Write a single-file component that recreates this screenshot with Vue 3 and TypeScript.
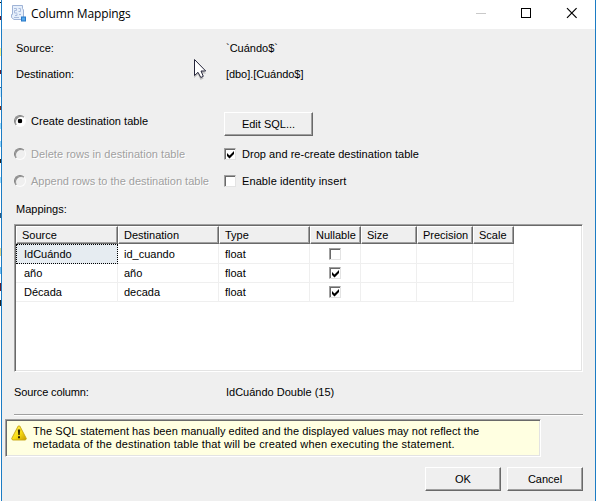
<script setup lang="ts">
interface Column { label: string; width: number }
interface Mapping { source: string; destination: string; type: string; nullable: boolean }

const columns: Column[] = [
  { label: 'Source', width: 102 },
  { label: 'Destination', width: 101 },
  { label: 'Type', width: 91 },
  { label: 'Nullable', width: 51 },
  { label: 'Size', width: 56 },
  { label: 'Precision', width: 56 },
  { label: 'Scale', width: 41 },
]
const template = columns.map((c) => c.width + 'px').join(' ')

const mappings: Mapping[] = [
  { source: 'IdCuándo', destination: 'id_cuando', type: 'float', nullable: false },
  { source: 'año', destination: 'año', type: 'float', nullable: true },
  { source: 'Década', destination: 'decada', type: 'float', nullable: true },
]
</script>

<template>
  <div class="screen">
    <div class="behind"></div>
    <div class="window">
      <header class="titlebar">
        <svg class="app-icon" width="15" height="17" viewBox="0 0 15 17">
          <path d="M1.5.5H11.5V3.5L12.5 5V14.5H3L.5 12.5V9.5H1.5Z" fill="#e6effb" stroke="#9fb3d6" />
          <path d="M3 3.5H5.5V5.500H3.500V8H6M7.500 3.500H9.500V6.500H7.500M4 10.500H6V8.500M8 9.500H10M3 12.500H8" fill="none" stroke="#a9bbdc" />
          <rect x="10.500" y="12" width="4" height="4" fill="#54a7ea" stroke="#2878c8" />
        </svg>
        <h1>Column Mappings</h1>
        <div class="controls">
          <svg width="46" height="29" viewBox="0 0 46 29"><path d="M18 13.500H28" stroke="#c9c9c9" /></svg>
          <svg width="46" height="29" viewBox="0 0 46 29"><rect x="17.500" y="8.500" width="9" height="9" fill="none" stroke="#000" /></svg>
          <svg width="46" height="29" viewBox="0 0 46 29"><path d="M17 8.200L26.600 17.800M26.600 8.200L17 17.800" stroke="#000" stroke-width="1.200" /></svg>
        </div>
      </header>

      <main class="content">
        <div class="pair first"><span>Source:</span><span>`Cuándo$`</span></div>
        <div class="pair"><span>Destination:</span><span class="tight">[dbo].[Cuándo$]</span></div>

        <div class="options">
          <label class="opt create"><i class="radio on"></i><span class="loose">Create destination table</span></label>
          <button class="btn edit">Edit SQL...</button>
          <label class="opt off"><i class="radio"></i><span class="loose">Delete rows in destination table</span></label>
          <label class="opt"><i class="check"><svg width="9" height="9" viewBox="0 0 9 9"><path d="M1 3V6L3.500 8.500L8 4V1L3.500 5.500Z" /></svg></i><span class="loose">Drop and re-create destination table</span></label>
          <label class="opt off"><i class="radio"></i><span>Append rows to the destination table</span></label>
          <label class="opt"><i class="check"></i><span class="looser">Enable identity insert</span></label>
        </div>

        <div class="caption">Mappings:</div>
        <div class="grid">
          <div class="row head" :style="{ gridTemplateColumns: template }">
            <div v-for="c in columns" :key="c.label" class="th"><span>{{ c.label }}</span></div>
          </div>
          <div v-for="(m, i) in mappings" :key="m.source" class="row" :class="{ current: i === 0 }" :style="{ gridTemplateColumns: template }">
            <div class="td lead">{{ m.source }}</div>
            <div class="td">{{ m.destination }}</div>
            <div class="td">{{ m.type }}</div>
            <div class="td center"><i class="check"><svg v-if="m.nullable" width="9" height="9" viewBox="0 0 9 9"><path d="M1 3V6L3.500 8.500L8 4V1L3.500 5.500Z" /></svg></i></div>
            <div class="td"></div>
            <div class="td"></div>
            <div class="td"></div>
          </div>
        </div>

        <div class="pair detail"><span class="tight2">Source column:</span><span>IdCuándo Double (15)</span></div>
        <div class="rule"></div>
      </main>

      <div class="notice">
        <svg class="warn" width="16" height="16" viewBox="0 0 16 16">
          <defs>
            <linearGradient id="amber" x1="0" y1="0" x2="1" y2="1"><stop offset="0" stop-color="#fff46a" /><stop offset=".55" stop-color="#f8dc12" /><stop offset="1" stop-color="#c59a00" /></linearGradient>
          </defs>
          <path d="M7.200 1H8.800L15.300 13.500L14.500 15H1.500L.7 13.500Z" fill="url(#amber)" stroke="#c8a510" stroke-width=".9" stroke-linejoin="round" />
          <path d="M6.800 4.500H9.200L8.700 10H7.300ZM7 11.200H9V13.200H7Z" fill="#302700" />
        </svg>
        <p><span class="l1">The SQL statement has been manually edited and the displayed values may not reflect the</span><br /><span class="l2">metadata of the destination table that will be created when executing the statement.</span></p>
      </div>

      <footer class="actions">
        <button class="btn">OK</button>
        <button class="btn">Cancel</button>
      </footer>

      <svg class="cursor" width="16" height="23" viewBox="0 0 16 23">
        <path d="M3 3V20L7 16.500L9.500 22L12.500 20.500L10.500 15.500H15Z" fill="#000" opacity=".2" />
        <path d="M3.500 1.500V17.500L7 14.300L9.800 19.500L12.300 18.300L10 13H14.700Z" fill="#fff" stroke="#25253a" />
      </svg>
    </div>
  </div>
</template>

<style>
body { margin: 0; overflow: hidden; }
</style>

<style scoped>
* { box-sizing: border-box; }
.screen {
  display: flex;
  width: 596px;
  height: 501px;
  font: 11px/13px "Liberation Sans", Arial, sans-serif;
  color: #000;
  white-space: nowrap;
}
.behind {
  width: 1px;
  background: linear-gradient(#fff 0 2px, #111 2px 3px, #fff 3px 16px, #621c2c 16px 20px, #fff 20px 48px, #fff58c 48px 56px, #fff 56px 70px, #621c2c 70px 74px, #fff 74px 87px, #2b5d91 87px 88px, #c9eaff 88px 97px, #fff 97px 106px, #7a2d17 106px 110px, #fff 110px 123px, #9bdcff 123px 129px, #fff 129px 141px, #8fd5ff 141px 147px, #fff 147px 159px, #222 159px 163px, #fff 163px 177px, #9bdcff 177px 183px, #fff 183px 213px, #30587c 213px 218px, #fff 218px 248px, #e8d98a 248px 256px, #fff 256px 267px, #6abcf2 267px 274px, #fff 274px 283px, #621c2c 283px 291px, #fff 291px 300px, #222 300px 306px, #fff 306px);
}
.window {
  position: relative;
  display: flex;
  flex-direction: column;
  width: 595px;
  border: solid #1c7cc4;
  border-width: 0 1px;
  background: #efefef;
}
.titlebar { display: flex; height: 29px; background: #fff; }
.app-icon { margin: 5px 0 0 9px; }
h1 {
  margin: 4px 0 0 5px;
  font: 400 12px/19px "Open Sans", "Noto Sans", sans-serif;
  letter-spacing: -.13px;
}
.controls { display: flex; margin: 0 -1px 0 auto; }
.content { display: flex; flex-direction: column; padding: 0 12px; }
.pair { display: grid; grid-template-columns: 210px auto; height: 26px; padding-left: 2px; align-items: center; }
.pair.first { margin-top: 6px; }
.tight { letter-spacing: -.06px; }
.tight2 { letter-spacing: -.12px; }
.loose { letter-spacing: .04px; }
.looser { letter-spacing: .1px; }
.options { display: grid; grid-template-columns: 210px auto; grid-template-rows: 34px 27px 27px; height: 88px; margin-top: 27px; }
.opt { display: flex; align-items: center; gap: 6px; height: 27px; margin-top: -7px; }
.opt.create { margin-top: -6px; }
.off { color: #a0a0a0; text-shadow: 1px 1px #fff; }
.radio {
  flex: none;
  width: 12px;
  height: 12px;
  margin: -2px -1px 0 0;
  border: 1px solid;
  border-color: #808080 #fcfcfc #fcfcfc #808080;
  border-radius: 50%;
  background: #efefef;
  box-shadow: inset 1px 1px #909090;
}
.radio.on { background: radial-gradient(circle, #000 0 2px, #fff 2.6px); }
.check {
  display: flex;
  flex: none;
  width: 12px;
  height: 12px;
  border: 1px solid;
  border-color: #a0a0a0 #e3e3e3 #e3e3e3 #a0a0a0;
  background: #fff;
  box-shadow: inset 1px 1px #696969;
}
.opt .check { margin-top: -2px; }
.check svg { margin: 1px 0 0 1px; }
.btn {
  width: 76px;
  height: 24px;
  padding: 0;
  border: 1px solid;
  border-color: #fff #696969 #696969 #fff;
  border-radius: 0;
  background: #efefef;
  box-shadow: inset -1px -1px #a0a0a0;
  color: #000;
  font: inherit;
}
.btn.edit { width: 89px; margin-top: -2px; }
.caption { height: 22px; padding: 0 0 0 2px; line-height: 15px; }
.grid {
  height: 148px;
  border: 1px solid;
  border-color: #a0a0a0 #fff #fff #a0a0a0;
  box-shadow: inset 1px 1px #696969, inset -1px -1px #e3e3e3;
  padding: 1px;
  background: #fff;
}
.row { display: grid; height: 19px; }
.row.head { height: 18px; }
.row.current { height: 20px; }
.th {
  padding: 2px 0 0 5px;
  border: 1px solid;
  border-color: #fff #696969 #696969 #fff;
  box-shadow: inset -1px -1px #a0a0a0;
  background: #efefef;
  line-height: 13px;
}
.td { padding: 3px 0 0 6px; border: solid #efefef; border-width: 0 1px 1px 0; }
.td.lead { padding-left: 8px; }
.td.center { display: flex; justify-content: center; padding: 3px 0 0; }
.current .td { padding-top: 4px; }
.current .td.lead { padding: 3px 0 0 7px; background: #e6ecf1; border: 1px dotted #000; }
.pair.detail { margin-top: 7px; padding-left: 0; grid-template-columns: 212px auto; }
.rule { height: 2px; margin-top: 9px; background: #fff; border-top: 1px solid #a0a0a0; }
.notice {
  display: flex;
  width: 536px;
  height: 38px;
  margin: 3px 0 0 3px;
  border: 1px solid;
  border-color: #a0a0a0 #fff #fff #a0a0a0;
  box-shadow: inset 1px 1px #696969, inset -1px -1px #e3e3e3;
  background: #ffffe1;
}
.warn { margin: 5px 0 0 5px; }
.notice p { margin: 5px 0 0 6px; }
.l1 { letter-spacing: .06px; }
.l2 { letter-spacing: .18px; }
.actions { display: flex; justify-content: flex-end; gap: 6px; padding: 10px 12px 0 0; }
.cursor { position: absolute; left: 189px; top: 58px; }
</style>
